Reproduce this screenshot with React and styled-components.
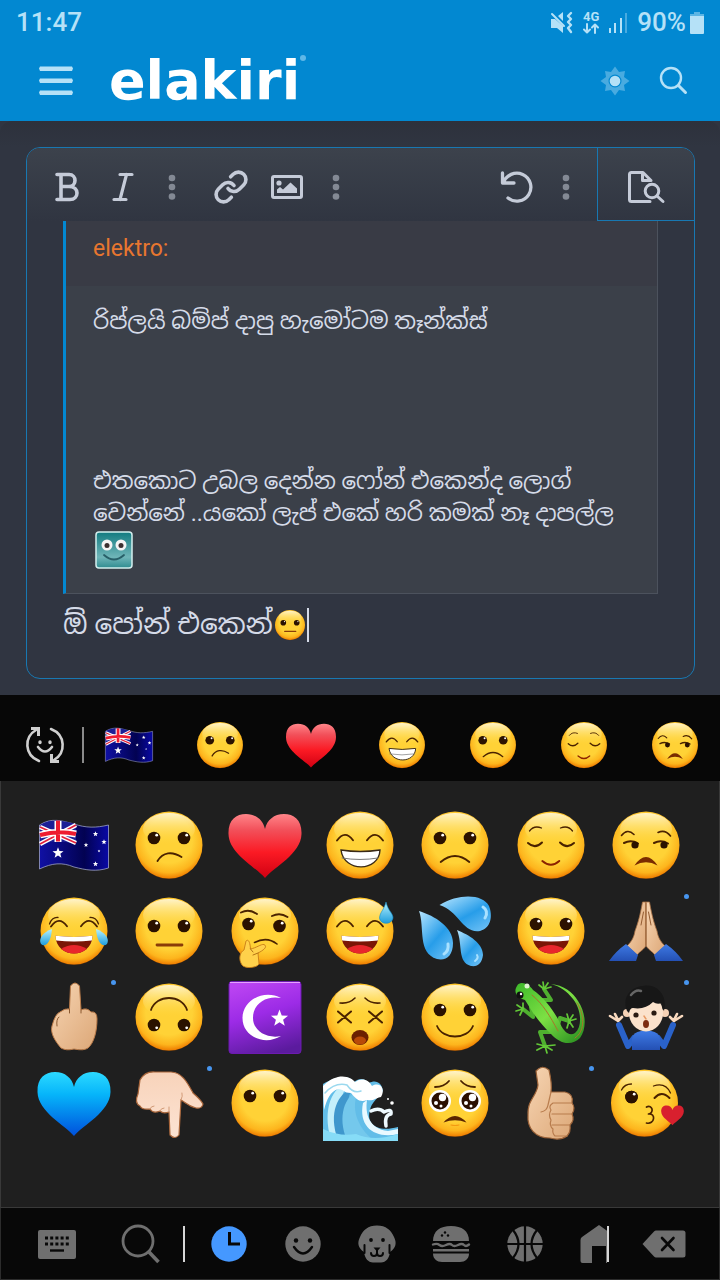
import React from 'react'
import styled, { createGlobalStyle } from 'styled-components'

const colors = {
  brand: '#0288d1',
  brandText: '#b5e1f7',
  page: '#303541',
  toolbarIcon: '#c5cbd8',
  border: '#1878b2',
  text: '#d5dbe8',
  key: '#6f6f6f',
}

/* emoji drawings, all centred on 0,0 in a 76 x 76 box */

const Eyes = ({ left = [-15, -7], right = [15, -7], r = 6.3, flip }) =>
  [left, right].map(([x, y]) => (
    <g key={x}>
      <circle cx={x} cy={y} r={r} fill="#2b1200" />
      <circle cx={x + 2.7} cy={flip ? y + 2.8 : y - 2.8} r="1.4" fill="#fff" />
    </g>
  ))

const Line = ({ d, w = 1.6, c = '#4a2200' }) => (
  <path d={d} fill="none" stroke={c} strokeWidth={w} strokeLinecap="round" strokeLinejoin="round" />
)

const Face = ({ children }) => (
  <>
    <circle cy="0.8" r="33.2" fill="#8a4300" opacity="0.5" />
    <circle r="33.5" fill="url(#face)" />
    <ellipse cy="-16" rx="26" ry="16" fill="url(#shine)" />
    {children}
  </>
)

const Laugh = () => (
  <>
    <path d="M-18.5 4.8 Q0 7 18.5 4.8 C18 28.5 -18 28.5 -18.5 4.8Z" fill="#7a1606" />
    <path d="M-13 18 Q0 10 13 18 Q0 27 -13 18Z" fill="#e8262c" />
    <path d="M-18.5 4.8 Q0 7 18.5 4.8 L17.8 9.5 Q0 11.5 -17.8 9.5Z" fill="#fff" />
  </>
)

const HappyEyes = () => (
  <>
    <Line d="M-23 -4.5 Q-15 -15.5 -7 -4.8" w={1.9} />
    <Line d="M7 -4.8 Q15 -15.5 23 -4.5" w={1.9} />
  </>
)

const Heart = ({ fill }) => (
  <path
    d="M0 33 C-9 22 -36 9 -36.5 -11 C-37 -25 -29 -31 -19 -31 C-9 -31 -2 -25 0 -16 C2 -25 9 -31 19 -31 C29 -31 37 -25 36.5 -11 C36 9 9 22 0 33Z"
    fill={fill}
  />
)

const starPath = (x, y, r) => {
  const points = []
  for (let i = 0; i < 10; i++) {
    const a = -Math.PI / 2 + (i * Math.PI) / 5
    const l = i % 2 ? r * 0.42 : r
    points.push(`${x + Math.cos(a) * l},${y + Math.sin(a) * l}`)
  }
  return points.join(' ')
}

const Star = ({ x, y, r }) => <polygon points={starPath(x, y, r)} fill="#fff" />

const flagShape =
  'M-34.5 -20 C-22 -28 -12 -24 0 -21 C12 -17 22 -17 34.5 -20 V23 C22 27 12 25 0 22 C-12 17 -22 18 -34.5 24Z'

const drawings = {
  flag: (
    <>
      <path d={flagShape} fill="url(#navy)" stroke="#9aa0c8" strokeWidth="0.8" />
      <path d="M-34 -20 C-22 -27 -10 -24 2 -21 V-1 C-10 -4 -22 -5 -34 0Z" fill="#1c1f96" />
      <path d="M-34 -18 L2 -2 M-34 -1 L2 -20" stroke="#fff" strokeWidth="4.5" />
      <path d="M-34 -18 L2 -2 M-34 -1 L2 -20" stroke="#e3203a" strokeWidth="1.7" />
      <path d="M-16 -24 V-3 M-34 -10 Q-16 -15 2 -11" fill="none" stroke="#fff" strokeWidth="7" />
      <path d="M-16 -24.5 V-3.5 M-34 -10 Q-16 -15 2 -11" fill="none" stroke="#ee1c30" strokeWidth="4" />
      <Star x={-16} y={8} r={5.8} />
      <Star x={21.5} y={-11} r={2.8} />
      <Star x={30} y={-3} r={2.8} />
      <Star x={12} y={0} r={2.4} />
      <Star x={25} y={6} r={1.5} />
      <Star x={21.5} y={19} r={2.8} />
    </>
  ),
  confused: (
    <Face>
      <Eyes />
      <Line d="M-11.5 16 C-6 7 3 6 12.5 12" w={1.9} />
    </Face>
  ),
  heart: <Heart fill="url(#red)" />,
  grin: (
    <Face>
      <HappyEyes />
      <path d="M-19 5 Q0 8 20 5 C19 27 -16 28 -19 5Z" fill="#fff" stroke="#3a2a18" strokeWidth="1.4" />
      <Line d="M-18 13 Q0 16 18 13" w={1} c="#777" />
    </Face>
  ),
  frown: (
    <Face>
      <Eyes />
      <Line d="M-14.3 17 Q0 5 14.3 17" w={1.9} />
    </Face>
  ),
  relieved: (
    <Face>
      <Line d="M-21.5 -14 Q-17 -20 -9.5 -17 M21.5 -14 Q17 -20 9.5 -17" w={1.3} />
      <Line d="M-23 -2 Q-16 4.5 -9 -2.5 M23 -2 Q16 4.5 9 -2.5" w={2} />
      <Line d="M-8.7 16 Q0 23.5 8.3 16" w={1.9} c="#8c2200" />
    </Face>
  ),
  unamused: (
    <Face>
      <Line d="M-24.5 -9.5 Q-18.5 -17 -12 -10.5 M12 -12.5 Q19 -16 24.5 -9" w={1.6} />
      <Line d="M-22 -2 Q-15 -5.5 -8 -1.5 M8 -2 Q15 -5.5 22 -1.5" w={2} />
      <circle cx="-11" cy="0" r="3.6" fill="#2b1200" />
      <circle cx="18" cy="0" r="3.6" fill="#2b1200" />
      <path d="M-11.5 20.5 Q-6 12 0 12 Q6 12 11.5 20.5 Q0 14 -11.5 20.5Z" fill="#7a2c00" />
    </Face>
  ),
  joy: (
    <Face>
      <Line d="M-24.5 -7 Q-22 -14 -16 -13.5 M24.5 -7 Q22 -14 16 -13.5" w={1.3} />
      <HappyEyes />
      <Laugh />
      <path d="M-22 -2 C-31 1 -36 8 -33 13 C-29 17 -23 12 -22 -2Z" fill="url(#drop)" />
      <path d="M22 -2 C31 1 36 8 33 13 C29 17 23 12 22 -2Z" fill="url(#drop)" />
    </Face>
  ),
  neutral: (
    <Face>
      <Eyes left={[-15, -5]} right={[15, -5]} />
      <Line d="M-12 14 H13" w={2.8} c="#8a3c08" />
    </Face>
  ),
  thinking: (
    <Face>
      <Eyes left={[-16.5, -7]} right={[14.5, -5]} />
      <Line d="M-24 -18.5 Q-16 -22.5 -8 -17 M7 -15 Q15 -19 22.5 -14" w={1.9} />
      <Line d="M-10.5 11.5 Q2 5 12 13" />
      <path
        d="M-19 10 C-17 8 -15 10 -14.5 18 C-9 17 -4 13 -1 13.5 C2 15 1 18 -7 22 L-6 33 C-8 37 -20 38 -23 34 C-27 28 -25 21 -21 19Z"
        fill="#ffd14b"
        stroke="#c77c16"
        strokeWidth="0.9"
      />
      <Line d="M-14.5 18 L-12 21 M-7 22 L-12 24" w={0.9} c="#a8660f" />
    </Face>
  ),
  sweat: (
    <Face>
      <HappyEyes />
      <Laugh />
      <path d="M26 -29 C28 -20 33 -18 33 -13 C32 -6 20 -6 19.5 -13 C20 -19 24 -21 26 -29Z" fill="url(#drop)" stroke="#128bc9" strokeWidth="0.6" />
    </Face>
  ),
  drops: (
    <>
      <path d="M-15.5 -26 C4 -38 28 -37 34 -25 C38 -15 36 -3 25 0 C8 3 4 -20 -15.5 -26Z" fill="url(#drop2)" />
      <path d="M-36 -20 C-20 -15 -2 -4 -2 12 C-2 25 -9 30 -18 28 C-38 22 -30 -4 -36 -20Z" fill="url(#drop2)" />
      <path d="M2 -1 C14 4 28 12 28 24 C27 32 23 36 16 35 C2 31 8 14 2 -1Z" fill="url(#drop2)" />
      <Line d="M28 -24 Q34 -20 30 -13" w={3} c="#a9e1ff" />
      <Line d="M-7 13 Q-6 20 -11 23" w={3} c="#a9e1ff" />
      <Line d="M22 24 Q24 27 20 30" w={2} c="#a9e1ff" />
    </>
  ),
  smileOpen: (
    <Face>
      <Eyes />
      <Laugh />
    </Face>
  ),
  pray: (
    <>
      <path d="M0 -29 H-3.5 C-6 -15 -8 -8 -11 0 C-12 6 -14 10 -19 15 L-9 24 C-6 20 -1 18 0 14Z" fill="url(#skin)" stroke="#a66f42" strokeWidth="0.8" />
      <path d="M0 -29 H3.5 C6 -15 8 -8 11 0 C12 6 14 10 19 15 L9 24 C6 20 1 18 0 14Z" fill="url(#skin)" stroke="#a66f42" strokeWidth="0.8" />
      <Line d="M0 -28 V14 M-2.5 -19 L-5 -6 M2.5 -19 L5 -6" w={1} c="#945c32" />
      <path d="M-20 13 L-8 24 L-10 30 H-37 Q-30 20 -20 13Z M20 13 L8 24 L10 30 H37 Q30 20 20 13Z" fill="url(#sleeve)" />
    </>
  ),
  finger: (
    <>
      <path
        d="M-4.5 -8 L-3.5 -31 Q1 -37 5.5 -31 L7 -7 Q13 -10 17 -5 Q23 -6 23 2 C23 14 20 26 14 31 Q10 34 0 32 Q-8 34 -13 31 C-19 24 -24 16 -22 9 Q-19 -3 -14 -5 Q-9 -9 -4.5 -8Z"
        fill="url(#skin)"
        stroke="#b97a48"
        strokeWidth="1"
      />
      <Line d="M-17 9 Q-18 2 -15 0 M-4.5 -8 V-4 M7 -7 V-4" w={1} c="#8a5930" />
    </>
  ),
  upside: (
    <Face>
      <Eyes left={[-15, 8]} right={[15, 8]} flip />
      <Line d="M-18 -7 C-13 -23 13 -23 18 -7" w={1.8} />
    </Face>
  ),
  crescent: (
    <>
      <rect x="-36" y="-35.5" width="72" height="72" rx="3" fill="url(#purple)" stroke="#6c1bb0" strokeWidth="1" />
      <path d="M-35 -34.5 H35" stroke="#e6a1ff" strokeWidth="1.2" />
      <path d="M16 -19 C-1 -28 -22.5 -17 -22.5 1 C-22.5 20 0 29 16 19 C2 22 -12 14 -12 1 C-12 -14 2 -22 16 -19Z" fill="#fff" />
      <Star x={14.5} y={1.5} r={9} />
    </>
  ),
  dizzy: (
    <Face>
      <Line d="M-20 -14 Q-11 -13 -5 -19 M20 -14 Q11 -13 5 -19" />
      <Line d="M-22 -5.5 L-9 5.5 M-22 5.5 L-9 -5.5 M22 -5.5 L9 5.5 M22 5.5 L9 -5.5" w={2} />
      <ellipse cy="20.5" rx="8.5" ry="7.5" fill="#6b2000" />
      <ellipse cy="23.5" rx="6" ry="4" fill="#b84a08" />
    </Face>
  ),
  smile: (
    <Face>
      <Eyes />
      <Line d="M-18 9 C-12 23 12 23 18 9" w={1.8} />
    </Face>
  ),
  lizard: (
    <>
      <Line d="M-9 -17 L0 -17 L-7 -28 M-20 -10 L-18 0 L-28 -8 M7 8 L9 1 L18 4 M2 15 L-11 15 L-6 29" w={4} c="#4fb02f" />
      <Line d="M-7 -28 L-12 -32 M-7 -28 L-8 -35 M-7 -28 L-3 -34 M-7 -28 L0 -30 M-28 -8 L-34 -12 M-28 -8 L-35 -6 M-28 -8 L-28 -14 M-28 -8 L-31 -2 M18 4 L25 2 M18 4 L22 -2 M18 4 L22 10 M18 4 L16 -3 M18 4 L16 11 M-6 29 L-14 33 M-6 29 L-4 36 M-6 29 L1 33 M-6 29 L4 28 M-6 29 L-14 27" w={1.7} c="#62c837" />
      <path
        d="M-34 -31 C-31 -37 -22 -33 -18 -27 C-8 -20 2 -8 8 4 C12 14 18 20 24 16 C32 9 30 -8 22 -18 C16 -26 8 -31 0 -33 C12 -32 22 -25 27 -16 C35 -4 36 11 29 21 C20 30 8 26 0 17 C-8 9 -15 1 -21 -9 L-26 -17 C-34 -19 -38 -25 -34 -31Z"
        fill="url(#green)"
      />
      <Line d="M-19 -22 C-8 -13 -1 -1 7 14 M24 21 C35 14 33 -4 26 -14" w={1} c="#a8752a" />
      <circle cx="-31" cy="-22" r="3.5" fill="#111" />
      <circle cx="-30" cy="-23" r="1.2" fill="#fff" />
      <circle cx="-24" cy="-31" r="2.5" fill="#dff5d0" />
    </>
  ),
  shrug: (
    <>
      <Line d="M-28 4 L-36 -1 M-28 3 L-31 -3 M-28 4 L-24 0 M28 4 L36 -1 M28 3 L31 -3 M28 4 L24 0" w={2.6} c="#f9d9be" />
      <Line d="M-27 8 L-18 29 L-12 21 M27 8 L18 29 L12 21" w={6} c="#2a62c9" />
      <path d="M-14 33 V22 Q-13 15 -5 14 H5 Q13 15 14 22 V33Z" fill="url(#sleeve)" />
      <circle cx="-19" cy="-4" r="4" fill="#f6d2b5" />
      <circle cx="19" cy="-4" r="4" fill="#f6d2b5" />
      <ellipse cy="-4" rx="17" ry="18.5" fill="#fbe2cc" />
      <path d="M-19 -6 C-25 -22 -12 -31 -3 -31 C12 -34 22 -20 18 -6 Q16 -8 16 -14 Q11 -12 7 -15 Q-1 -7 -13 -9 Q-16 -9 -17 -4Z" fill="#171717" />
      <Line d="M-15 -22 Q-10 -28 -5 -26" w={2.5} c="#666" />
      <circle cx="-10" cy="-2" r="2.6" fill="#291a12" />
      <circle cx="8" cy="-4" r="2.6" fill="#291a12" />
      <ellipse cy="7" rx="3" ry="4" fill="#7d2b10" />
      <Line d="M-2 -1 L0 2" w={1.5} c="#e99b65" />
    </>
  ),
  blueHeart: <Heart fill="url(#blue)" />,
  down: (
    <>
      <path
        d="M-29 -23 Q-24 -32 -14 -31 H2 C14 -31 20 -17 24 -10 Q32 -3 34 1 Q33 6 27 5 C19 3 16 -1 12 -3 L10 32 Q6 37 1 32 L0 9 Q-6 11 -9 8 Q-16 11 -19 6 Q-27 7 -29 3 Q-35 0 -31 -9Z"
        fill="url(#paleSkin)"
        stroke="#a9663b"
        strokeWidth="1.2"
      />
      <Line d="M-19 6 Q-18 3 -15 3 M-9 8 Q-8 5 -5 5 M0 9 V4 M12 -3 Q14 -7 13 -10" w={1} c="#d29b78" />
    </>
  ),
  noMouth: (
    <Face>
      <Eyes />
    </Face>
  ),
  wave: (
    <>
      <path d="M-37 37 V-19 C-22 -28 -11 -28 -6 -21 C2 -28 8 -21 9 -20 C16 -24 22 -20 23 -12 C18 -5 11 0 10 7 C6 20 16 30 38 24 V37Z" fill="#62bde8" />
      <path d="M-29 37 C-38 6 -28 -17 -11 -20 C-25 -3 -19 23 -1 37Z" fill="#c4effb" />
      <path d="M-22 37 C-32 10 -22 -10 -8 -14 C-17 3 -11 24 6 37Z" fill="#3f97cd" />
      <path d="M-13 37 C-23 14 -15 -8 -2 -11 C-9 4 -4 23 13 37Z" fill="#74c8ec" />
      <path d="M-37 -17 C-22 -32 -9 -26 -5 -21 C2 -26 9 -23 12 -17 C20 -22 26 -14 21 -6 C13 -4 14 -2 7 -3 C0 0 -4 -4 -9 -10 C-17 -10 -16 -14 -22 -14 C-30 -11 -33 -4 -36 7Z" fill="#fff" />
      <path d="M7 -3 C5 11 9 26 28 28 L38 26 V31 C16 36 -2 25 3 0Z" fill="#e9f9ff" />
      <Line d="M11 8 Q19 4 24 9 Q32 5 31 11 Q24 12 26 23" w={3.5} c="#eefaff" />
      <Line d="M-35 -10 Q-25 -21 -13 -18 Q-7 -9 1 -12" w={1.5} c="#9bd9ef" />
      <path d="M-37 26 Q-20 34 -4 31 Q14 39 38 31 V38 H-37Z" fill="#86dcf7" />
      <circle cx="32" cy="0" r="1.8" fill="#fff" />
      <circle cx="28" cy="-4" r="1" fill="#fff" />
    </>
  ),
  pleading: (
    <Face>
      {[-15, 15].map(x => (
        <g key={x}>
          <circle cx={x} cy="-2" r="11" fill="#fff" />
          <circle cx={x} cy="-2" r="8.5" fill="#2b0f00" />
          <circle cx={x + 2.5} cy="-5.5" r="3.7" fill="#fff" />
          <circle cx={x - 4} cy="0" r="2" fill="#fff" />
          <circle cx={x + 1} cy="3" r="1.5" fill="#fff" />
        </g>
      ))}
      <Line d="M-20 -16 Q-11 -16 -6 -22 M20 -16 Q11 -16 6 -22" w={1.8} />
      <path d="M-11.5 19.5 Q-6 13 0 13 Q6 13 11.5 19.5 Q0 15 -11.5 19.5Z" fill="#5a2500" />
      <Line d="M-4 22 Q0 23 4 22" w={1.2} c="#f39a12" />
    </Face>
  ),
  thumb: (
    <g transform="translate(-1 0)">
      <path
        d="M-14 -32 Q-8 -39 -1 -33 C1 -24 2 -18 1 -11 H15 Q24 -9 22 0 Q26 5 22 11 Q25 17 20 22 Q21 29 17 33 Q10 38 0 35 C-15 35 -23 25 -22 12 C-23 -3 -13 -7 -12 -18Z"
        fill="url(#skin)"
        stroke="#9b6238"
        strokeWidth="1.2"
      />
      <Line d="M1 -11 L-2 2 Q-3 8 -9 9 M22 0 H3 Q-2 3 1 7 Q-2 12 1 17 Q-1 23 3 26 M22 11 H2 M20 22 H2 M17 33 H5 Q2 30 3 26" w={1.2} c="#b87c4d" />
    </g>
  ),
  kiss: (
    <g transform="translate(-1.5 0)">
      <Face>
        <Eyes left={[-13, -6]} right={[-13, -6]} />
        <Line d="M-23 -13 Q-20 -19 -13 -19 M9 -17 Q21 -21 26 -10" w={1.3} />
        <Line d="M10 -5 Q17 -13 25 -5" w={2} />
        <Line d="M2 4 C8 1 10 10 4 11 C12 10 10 22 2 20" w={1.7} />
        <g transform="translate(28 12) scale(0.31)">
          <Heart fill="#d8202e" />
        </g>
      </Face>
    </g>
  ),
}

const EmojiDefs = () => (
  <HiddenSvg width="0" height="0" aria-hidden="true">
    <defs>
      <radialGradient id="face" cx="0.5" cy="0.42" r="0.58">
        <stop offset="0.6" stopColor="#ffd236" />
        <stop offset="0.85" stopColor="#fdb51d" />
        <stop offset="1" stopColor="#ee7d00" />
      </radialGradient>
      <linearGradient id="shine" x1="0" y1="0" x2="0" y2="1">
        <stop offset="0" stopColor="#fff8dc" stopOpacity="0.9" />
        <stop offset="1" stopColor="#ffd83e" stopOpacity="0" />
      </linearGradient>
      <linearGradient id="red" x1="0" y1="0" x2="0" y2="1">
        <stop offset="0" stopColor="#ff8589" />
        <stop offset="0.25" stopColor="#f2505a" />
        <stop offset="0.6" stopColor="#fb1a24" />
        <stop offset="1" stopColor="#d00012" />
      </linearGradient>
      <linearGradient id="blue" x1="0" y1="0" x2="0" y2="1">
        <stop offset="0" stopColor="#2cd9ff" />
        <stop offset="0.35" stopColor="#06b5fa" />
        <stop offset="1" stopColor="#0050dc" />
      </linearGradient>
      <linearGradient id="navy">
        <stop offset="0" stopColor="#1010a4" />
        <stop offset="0.65" stopColor="#020252" />
        <stop offset="1" stopColor="#0909a5" />
      </linearGradient>
      <linearGradient id="purple" x1="0.3" y1="0" x2="0.6" y2="1">
        <stop offset="0" stopColor="#bb44f2" />
        <stop offset="0.45" stopColor="#9c2be6" />
        <stop offset="1" stopColor="#5b1b9e" />
      </linearGradient>
      <linearGradient id="drop" x1="0" y1="0" x2="0" y2="1">
        <stop offset="0" stopColor="#b5f2ff" />
        <stop offset="1" stopColor="#1e9ddc" />
      </linearGradient>
      <linearGradient id="drop2" x1="0" y1="0" x2="0.8" y2="1">
        <stop offset="0" stopColor="#b8e6ff" />
        <stop offset="0.6" stopColor="#279de9" />
        <stop offset="1" stopColor="#67bdf4" />
      </linearGradient>
      <linearGradient id="skin" x1="0" y1="0" x2="1" y2="1">
        <stop offset="0" stopColor="#f7d5b3" />
        <stop offset="1" stopColor="#dca777" />
      </linearGradient>
      <linearGradient id="paleSkin" x1="0" y1="0" x2="0" y2="1">
        <stop offset="0" stopColor="#f8d3ba" />
        <stop offset="1" stopColor="#fce3d3" />
      </linearGradient>
      <linearGradient id="sleeve" x1="0" y1="0" x2="0" y2="1">
        <stop offset="0" stopColor="#3e7ae4" />
        <stop offset="1" stopColor="#2450b4" />
      </linearGradient>
      <linearGradient id="green" x1="0" y1="0" x2="1" y2="1">
        <stop offset="0" stopColor="#3db92a" />
        <stop offset="0.5" stopColor="#7de044" />
        <stop offset="1" stopColor="#22881d" />
      </linearGradient>
      <linearGradient id="teal" x1="0" y1="0" x2="0" y2="1">
        <stop offset="0" stopColor="#127b80" />
        <stop offset="0.7" stopColor="#6fb5b8" />
        <stop offset="1" stopColor="#2f8c90" />
      </linearGradient>
    </defs>
  </HiddenSvg>
)

const Emoji = ({ name, size }) => (
  <svg width={size} height={size} viewBox="-38 -38 76 76" aria-hidden="true">
    {drawings[name]}
  </svg>
)

/* toolbar and key icons */

const Icon = ({ w, h = w, box, children, stroke }) => (
  <svg
    width={w}
    height={h}
    viewBox={box || `0 0 ${w} ${h}`}
    fill={stroke ? 'none' : 'currentColor'}
    stroke={stroke ? 'currentColor' : 'none'}
    strokeWidth={stroke}
    strokeLinecap="round"
    strokeLinejoin="round"
    aria-hidden="true"
  >
    {children}
  </svg>
)

const DotsIcon = () => (
  <Icon w={8} h={26}>
    <circle cx="4" cy="4" r="3.3" />
    <circle cx="4" cy="13" r="3.3" />
    <circle cx="4" cy="22.5" r="3.3" />
  </Icon>
)

const suggestions = ['flag', 'confused', 'heart', 'grin', 'frown', 'relieved', 'unamused']

const recent = [
  ...suggestions,
  'joy', 'neutral', 'thinking', 'sweat', 'drops', 'smileOpen', 'pray',
  'finger', 'upside', 'crescent', 'dizzy', 'smile', 'lizard', 'shrug',
  'blueHeart', 'down', 'noMouth', 'wave', 'pleading', 'thumb', 'kiss',
]

const withVariants = ['pray', 'finger', 'shrug', 'down', 'thumb']

const categories = [
  {
    name: 'Recent',
    icon: (
      <Icon w={36}>
        <circle cx="18" cy="18" r="17.7" />
        <path d="M18.5 6 V18 H29" fill="none" stroke="#080808" strokeWidth="3" strokeLinecap="butt" strokeLinejoin="miter" />
      </Icon>
    ),
  },
  {
    name: 'Smileys',
    icon: (
      <Icon w={36}>
        <circle cx="18" cy="18" r="17.7" />
        <circle cx="11" cy="14.5" r="2.2" fill="#080808" />
        <circle cx="25" cy="14.5" r="2.2" fill="#080808" />
        <path d="M9 21 Q18 34 27 21" fill="none" stroke="#080808" strokeWidth="2.4" strokeLinecap="round" />
      </Icon>
    ),
  },
  {
    name: 'Animals',
    icon: (
      <Icon w={38} h={38}>
        <path d="M19 0.5 C28 0.5 33 5 36 12 C39 18 38 23 32 27 C31 34 28 37 23 37.5 H15 C10 37 7 34 6 27 C0 23 -1 18 2 12 C5 5 10 0.5 19 0.5Z" />
        <g fill="none" stroke="#080808" strokeWidth="2">
          <path d="M6.5 20 V28 M31.5 20 V28" />
          <path d="M19 25 V28 Q19 31 16 31 Q13 31 13 28 M19 28 Q19 31 22 31 Q25 31 25 28" />
        </g>
        <path d="M15.5 22.5 H22.5 L19 26.5Z" fill="#080808" />
        <circle cx="13" cy="15" r="1.9" fill="#080808" />
        <circle cx="25" cy="15" r="1.9" fill="#080808" />
      </Icon>
    ),
  },
  {
    name: 'Food',
    icon: (
      <Icon w={38} h={36}>
        <path d="M1 15 C1 5 8 0 19 0 C30 0 37 5 37 15Z" />
        <path d="M1 18.5 Q5 17 7.5 19 T14 19 T20 19 T26 19 T32 19 T37 18.5" fill="none" stroke="currentColor" strokeWidth="2.4" />
        <path d="M1 23 H37 V25.5 H1Z M1 27.5 H37 C37 33 33 36 28 36 H10 C5 36 1 33 1 27.5Z" />
        <circle cx="10" cy="9.5" r="1.2" fill="#080808" />
        <circle cx="13" cy="6.5" r="1.2" fill="#080808" />
        <circle cx="16" cy="9.5" r="1.2" fill="#080808" />
      </Icon>
    ),
  },
  {
    name: 'Activity',
    icon: (
      <Icon w={36}>
        <circle cx="18" cy="18" r="17.7" />
        <path d="M18 0 V36 M0 18 H36 M6 4 Q17 18 6 32 M30 4 Q19 18 30 32" fill="none" stroke="#080808" strokeWidth="2.2" />
      </Icon>
    ),
  },
  {
    name: 'Travel',
    icon: (
      <Icon w={38} h={38}>
        <path d="M19 0 L36 12 Q37.5 13 37.5 15 V36 Q37.5 38 35.5 38 H26 V21 H12 V38 H2.5 Q0.5 38 0.5 36 V15 Q0.5 13 2 12Z" />
      </Icon>
    ),
  },
]

export default function App() {
  return (
    <Screen>
      <GlobalStyle />
      <EmojiDefs />
      <Header>
        <StatusBar>
          <StatusText>11:47</StatusText>
          <StatusIcons>
            <Icon w={24} h={22}>
              <path d="M1 7 H5 L13 14 V21 L7 16 H1Z M8 4 L13 0 V9Z" />
              <path d="M2 2 L14 14" stroke="currentColor" strokeWidth="2" />
              <path d="M21 1 L18 4 L21 7 L18 10 L21 13 L18 16 L21 20" fill="none" stroke="currentColor" strokeWidth="2.4" />
            </Icon>
            <Network>
              <span>4G</span>
              <Icon w={16} h={11} stroke="2">
                <path d="M4 1 V9 M1 6.5 L4 9.5 L7 6.5 M12 10 V2 M9 4.5 L12 1.5 L15 4.5" />
              </Icon>
            </Network>
            <Icon w={20} h={20}>
              <path d="M1 15 H3 V20 H1Z M6 10 H8 V20 H6Z M12 5 H14 V20 H12Z" />
              <path d="M17 0 H19 V20 H17Z" opacity="0.4" />
            </Icon>
            <Battery>
              <StatusText>90%</StatusText>
              <Icon w={14} h={22}>
                <path d="M4 0 H10 V2 H14 V4 H0 V2 H4Z" opacity="0.5" />
                <path d="M0 4 H14 V21 Q14 22 13 22 H1 Q0 22 0 21Z" />
              </Icon>
            </Battery>
          </StatusIcons>
        </StatusBar>
        <SiteBar>
          <HeaderButton aria-label="Menu">
            <Icon w={34} h={30}>
              <path d="M1 0.5 H33 L34 2.5 L33 5 H1 L0 2.5Z M1 12.5 H33 L34 14.5 L33 17 H1 L0 14.5Z M1 24.5 H33 L34 26.5 L33 29 H1 L0 26.5Z" />
            </Icon>
          </HeaderButton>
          <Logo href="#home">
            elakiri
            <LogoMark />
          </Logo>
          <HeaderButton aria-label="Change style">
            <Icon w={30} box="-15 -15 30 30">
              <path
                d="M0 -14.5 L4 -9 L10 -10 L9 -4 L14.5 0 L9 4 L10 10 L4 9 L0 14.5 L-4 9 L-10 10 L-9 4 L-14.5 0 L-9 -4 L-10 -10 L-4 -9Z"
                opacity="0.4"
              />
              <circle r="6.5" fill={colors.brand} />
              <circle r="5.3" />
            </Icon>
          </HeaderButton>
          <HeaderButton aria-label="Search">
            <Icon w={28} stroke="2.4">
              <circle cx="12" cy="11" r="10" />
              <path d="M19.5 18.5 L26.5 25.5" strokeWidth="3" />
            </Icon>
          </HeaderButton>
        </SiteBar>
      </Header>

      <Content>
        <Editor>
          <Toolbar>
            <ToolGroup>
              <Tool aria-label="Bold">
                <Icon w={24} h={30} stroke="3.6">
                  <path d="M2 2.5 H14 C22 2.5 22 14.5 14 14.5 H6 M14 14.5 C25 14.5 24 27.5 15 27.5 H2 M6 2.5 V27.5" />
                </Icon>
              </Tool>
              <Tool aria-label="Italic">
                <Icon w={24} h={30} stroke="3.2">
                  <path d="M9 2.5 H21 M3 27.5 H15 M15.5 2.5 L9 27.5" />
                </Icon>
              </Tool>
              <Tool $narrow aria-label="More text options"><DotsIcon /></Tool>
            </ToolGroup>
            <ToolGroup>
              <Tool aria-label="Insert link">
                <Icon w={36} box="0 0 24 24" stroke="2.4">
                  <path d="M10 13a5 5 0 0 0 7.54.54l3-3a5 5 0 0 0-7.07-7.07l-1.72 1.71" />
                  <path d="M14 11a5 5 0 0 0-7.54-.54l-3 3a5 5 0 0 0 7.07 7.07l1.71-1.71" />
                </Icon>
              </Tool>
              <Tool aria-label="Insert image">
                <Icon w={32} h={24}>
                  <path d="M3 0 H29 Q32 0 32 3 V21 Q32 24 29 24 H3 Q0 24 0 21 V3 Q0 0 3 0Z M3 3 V21 H29 V3Z" fillRule="evenodd" />
                  <circle cx="8" cy="8" r="2.6" />
                  <path d="M6 18 V14.5 L9 12 L12 14.5 L19.5 7.5 L26 13.5 V18Z" />
                </Icon>
              </Tool>
              <Tool $narrow aria-label="More insert options"><DotsIcon /></Tool>
            </ToolGroup>
            <ToolGroup $end>
              <Tool aria-label="Undo">
                <Icon w={34} h={34} stroke="3.3">
                  <path d="M2.5 3 V13 H14 M3.5 13 A14 14 0 1 1 8 28" />
                </Icon>
              </Tool>
              <Tool $narrow aria-label="More options"><DotsIcon /></Tool>
            </ToolGroup>
            <PreviewButton aria-label="Preview">
              <Icon w={38} h={34} stroke="3">
                <path d="M23 31.5 H4.5 Q2.5 31.5 2.5 29.5 V4.5 Q2.5 2.5 4.5 2.5 H16 L24 10.5 M15.5 3 V10.5 H24" />
                <circle cx="25" cy="21" r="6.8" />
                <path d="M30 26 L36 31.5" />
              </Icon>
            </PreviewButton>
          </Toolbar>
          <Message>
            <Quote>
              <QuoteTitle><a href="#elektro">elektro:</a></QuoteTitle>
              <QuoteBody>
                <p>රිප්ලයි බම්ප් දාපු හැමෝටම තෑන්ක්ස්</p>
                <p>
                  එතකොට උබල දෙන්න ෆෝන් එකෙන්ද ලොග්
                  <br />
                  වෙන්නේ ..යකෝ ලැප් එකේ හරි කමක් නෑ දාපල්ල
                </p>
                <Smilie>
                  <Icon w={38}>
                    <rect x="1" y="1" width="36" height="36" rx="3" fill="url(#teal)" stroke="#d4efee" strokeWidth="1.5" />
                    <circle cx="12" cy="14" r="5.5" fill="#f4f4f4" />
                    <circle cx="26" cy="14" r="5.5" fill="#f4f4f4" />
                    <circle cx="12" cy="14.5" r="2.5" fill="#3c3030" />
                    <circle cx="26" cy="14.5" r="2.5" fill="#3c3030" />
                    <path d="M9 24 Q19 33 29 24" fill="none" stroke="#285f68" strokeWidth="1.8" />
                  </Icon>
                </Smilie>
              </QuoteBody>
            </Quote>
            <Reply>
              <ReplyInput aria-label="Reply" defaultValue="ඕ පෝන් එකෙන්" />
              <Emoji name="neutral" size={34} />
              <Caret />
            </Reply>
          </Message>
        </Editor>
      </Content>

      <Keyboard>
        <SuggestionBar>
          <RefreshButton aria-label="Switch suggestions">
            <Icon w={38} h={38} stroke="2.6">
              <path d="M13 35 C-2 29 -2 11 10 4 M25 3 C40 9 40 27 28 34" />
              <path d="M5 2.5 H12.5 V10 M33 35.5 H25.5 V28" strokeWidth="3" strokeLinecap="butt" strokeLinejoin="miter" />
              <path d="M12 21 Q19 30 26 21" />
              <path d="M14 16 V16.5 M24 16 V16.5" strokeWidth="3.4" />
            </Icon>
          </RefreshButton>
          <Divider $dim />
          <Suggestions>
            {suggestions.map(name => (
              <EmojiKey key={name} aria-label={name}>
                <Emoji name={name} size={52} />
              </EmojiKey>
            ))}
          </Suggestions>
        </SuggestionBar>
        <EmojiGrid>
          {recent.map(name => (
            <EmojiKey key={name} aria-label={name}>
              <Emoji name={name} size={76} />
              {withVariants.includes(name) && <VariantDot />}
            </EmojiKey>
          ))}
        </EmojiGrid>
        <KeyBar>
          <Key aria-label="Keyboard">
            <Icon w={38} h={30}>
              <rect y="1" width="38" height="29" rx="2" />
              <g fill="none" stroke="#080808" strokeLinecap="butt">
                <path d="M7 9 H31 M7 15 H31" strokeWidth="3.2" strokeDasharray="3 2.2" />
                <path d="M12 21.5 H26" strokeWidth="2.4" />
              </g>
            </Icon>
          </Key>
          <Key aria-label="Search emoji">
            <Icon w={40} h={40} stroke="2.8">
              <circle cx="17" cy="17" r="15" />
              <path d="M28 28 L37.5 38" strokeWidth="3.6" strokeLinecap="butt" />
            </Icon>
          </Key>
          <Divider />
          <Categories>
            {categories.map(({ name, icon }, i) => (
              <CategoryKey key={name} $active={i === 0} aria-label={name}>
                {icon}
              </CategoryKey>
            ))}
          </Categories>
          <Divider />
          <BackspaceKey aria-label="Backspace">
            <Icon w={44} h={28}>
              <path d="M12 1.5 Q13 0.5 14 0.5 H41 Q43.5 0.5 43.5 3 V25 Q43.5 27.5 41 27.5 H14 Q13 27.5 12 26.5 L0.5 14Z" />
              <path d="M20 8 L31.5 20 M31.5 8 L20 20" stroke="#080808" strokeWidth="2.6" />
            </Icon>
          </BackspaceKey>
        </KeyBar>
      </Keyboard>
    </Screen>
  )
}

const GlobalStyle = createGlobalStyle`
  * {
    box-sizing: border-box;
  }

  body {
    margin: 0;
    background: #080808;
    font-family: Roboto, 'Noto Sans', 'Noto Sans Sinhala', sans-serif;
  }

  button {
    display: flex;
    align-items: center;
    justify-content: center;
    padding: 0;
    border: 0;
    background: none;
    color: inherit;
  }

  svg {
    display: block;
    flex-shrink: 0;
    overflow: visible;
  }
`

const HiddenSvg = styled.svg`
  position: absolute;
`

const Screen = styled.div`
  display: flex;
  flex-direction: column;
  min-height: 100vh;
  background: ${colors.page};
`

const Header = styled.header`
  color: ${colors.brandText};
  background: ${colors.brand};
`

const StatusBar = styled.div`
  display: flex;
  align-items: center;
  justify-content: space-between;
  height: 45px;
  padding: 0 16px;
`

const StatusText = styled.span`
  font-size: 26px;
  font-weight: 500;
  line-height: 45px;
`

const StatusIcons = styled.div`
  display: flex;
  align-items: center;
  gap: 9px;
`

const Battery = styled.div`
  display: flex;
  align-items: center;
  gap: 4px;
`

const Network = styled.div`
  display: flex;
  flex-direction: column;
  align-items: center;
  font-size: 13px;
  font-weight: 700;
  line-height: 12px;
`

const SiteBar = styled.div`
  display: flex;
  align-items: center;
  height: 76px;
  padding: 0 18px 4px 27px;
`

const HeaderButton = styled.button`
  width: 58px;
  height: 58px;
`

const Logo = styled.a`
  position: relative;
  margin: 0 auto 0 24px;
  color: #fff;
  font-family: 'DejaVu Sans', sans-serif;
  font-size: 54px;
  font-weight: 700;
  line-height: 60px;
  text-decoration: none;
`

const LogoMark = styled.i`
  position: absolute;
  top: 4px;
  right: -6px;
  width: 6px;
  height: 6px;
  border-radius: 50%;
  background: #5fb8e8;
`

const Content = styled.main`
  padding: 26px 25px 16px 26px;
  border-radius: 12px 12px 0 0;
  background: linear-gradient(#2d313c, ${colors.page} 26px);
`

const Editor = styled.section`
  overflow: hidden;
  border: 1px solid ${colors.border};
  border-radius: 14px;
`

const Toolbar = styled.div`
  display: flex;
  gap: 10px;
  height: 73px;
  padding-left: 12px;
  color: ${colors.toolbarIcon};
  background: linear-gradient(#3c424c, #303541);
`

const ToolGroup = styled.div`
  display: flex;
  align-items: center;
  padding-top: 5px;
  margin-left: ${props => (props.$end ? 'auto' : '0')};
`

const Tool = styled.button`
  width: ${props => (props.$narrow ? '42px' : '56px')};
  height: 56px;
  && {
    color: ${props => (props.$narrow ? '#838994' : colors.toolbarIcon)};
  }
`

const PreviewButton = styled.button`
  && {
    width: 97px;
    padding-top: 5px;
    border: solid ${colors.border};
    border-width: 0 0 1px 1px;
  }
`

const Message = styled.div`
  padding: 0 36px 22px;
  color: ${colors.text};
`

const Quote = styled.blockquote`
  margin: 0;
  border: 1px solid #4c525d;
  border-top: 0;
  border-left: 3px solid ${colors.brand};
  background: #3b4049;
  font-size: 23px;
  line-height: 32px;
`

const QuoteTitle = styled.div`
  padding: 12px 27px 21px;
  background: #393b45;

  a {
    color: #e8762f;
    text-decoration: none;
  }
`

const QuoteBody = styled.div`
  padding: 20px 27px 24px;

  p {
    margin: 0;
  }

  p + p {
    margin-top: 128px;
  }
`

const Smilie = styled.div`
  padding: 1px 2px 0;
`

const Reply = styled.div`
  display: flex;
  align-items: center;
  height: 62px;
`

const ReplyInput = styled.input`
  field-sizing: content;
  padding: 0;
  border: 0;
  outline: 0;
  background: none;
  color: inherit;
  font: inherit;
  font-size: 28px;
  line-height: 40px;
`

const Caret = styled.span`
  width: 2px;
  height: 34px;
  background: ${colors.text};
`

const Keyboard = styled.section`
  display: flex;
  flex: 1;
  flex-direction: column;
  background: #1f1f1f;
`

const SuggestionBar = styled.div`
  display: flex;
  align-items: center;
  height: 86px;
  padding-top: 14px;
  background: #070707;
`

const RefreshButton = styled.button`
  width: 82px;
  height: 72px;
  && {
    padding-left: 8px;
    color: #cfcfcf;
  }
`

const Divider = styled.span`
  flex-shrink: 0;
  width: 2px;
  height: 36px;
  background: ${props => (props.$dim ? '#8a8a8a' : '#d6d6d6')};
`

const Suggestions = styled.div`
  display: grid;
  flex: 1;
  grid-template-columns: repeat(7, 1fr);
`

const EmojiGrid = styled.div`
  display: grid;
  flex: 1;
  grid-template-columns: repeat(7, 1fr);
  grid-auto-rows: 86px;
  padding: 21px 25px 60px;
  border: 1px solid #393939;
  border-width: 0 1px 1px;
`

const EmojiKey = styled.button`
  position: relative;
`

const VariantDot = styled.i`
  position: absolute;
  top: 6px;
  right: 5px;
  width: 5px;
  height: 5px;
  border-radius: 50%;
  background: #4795ee;
`

const KeyBar = styled.div`
  display: flex;
  align-items: center;
  height: 72px;
  padding-left: 14px;
  border: 1px solid #2c2c2c;
  border-top: 0;
  color: ${colors.key};
  background: #080808;
`

const Key = styled.button`
  flex-shrink: 0;
  width: 84px;
  height: 70px;
`

const Categories = styled.div`
  display: flex;
  flex: 1;
  min-width: 0;
  padding-left: 7px;
  overflow: hidden;
`

const CategoryKey = styled.button`
  flex-shrink: 0;
  width: 74px;
  height: 70px;
  && {
    color: ${props => (props.$active ? '#4598ff' : colors.key)};
  }
`

const BackspaceKey = styled(Key)`
  width: 110px;
`
